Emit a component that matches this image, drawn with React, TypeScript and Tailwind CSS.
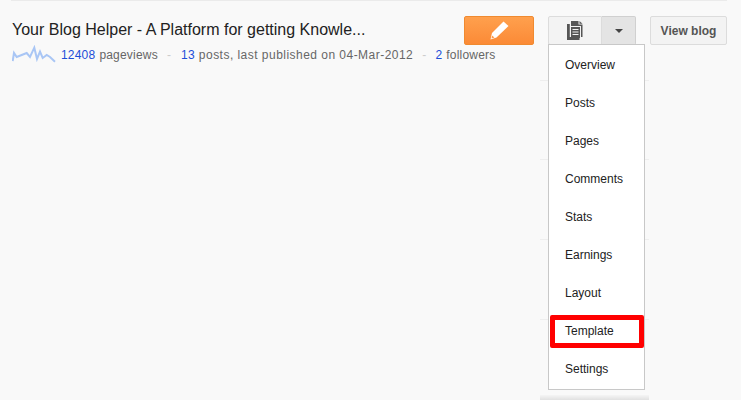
const MENU_ITEMS = ["Overview", "Posts", "Pages", "Comments", "Stats", "Earnings", "Layout", "Template", "Settings"];
const SEPARATORS = ["top-[79px]", "top-[158px]", "top-[238px]", "top-[318px]"];

function Sparkline() {
    return (
        <svg width="44" height="18" viewBox="0 0 44 18" className="-mt-[2px] shrink-0">
            <path
                d="M0.700 16 L2 8 L4.700 12 L9.700 10 L14.700 8 L18 12 L22.300 2.700 L25 14 L28 6.700 L30.700 13 L34.700 10 L38 12 L43 16.700"
                fill="none"
                stroke="#a9c6f5"
                strokeWidth="2"
            />
        </svg>
    );
}

function PagesIcon() {
    return (
        <svg width="16" height="19" viewBox="0 0 16 19">
            <path d="M4 0 H11.500 V3.500 H15.500 V16 H14 V5 H4 Z" fill="#555" />
            <path d="M12.500 0 L15.500 2.700 H12.500 Z" fill="#555" />
            <path d="M0 3 H2.800 V16 H12.500 V19 H0 Z" fill="#555" />
            <path d="M4 6 H13 V17 H4 Z" fill="#555" />
            <path d="M5.500 8 H11.500 V9 H5.500 Z M5.500 10.500 H11.500 V11.500 H5.500 Z M5.500 13 H11.500 V14 H5.500 Z" fill="#f1f1f1" />
        </svg>
    );
}

function PencilIcon() {
    return (
        <svg width="19" height="19" viewBox="0 0 19 19">
            <path d="M13.500 0.500 L18.500 5 L6.500 16.500 L0.500 18.500 L2 12 Z" fill="#fff" />
            <path d="M2 14.500 L4.500 16.500 L1.500 17.500 Z" fill="#fb9a4c" />
        </svg>
    );
}

export default function App() {
    return (
        <div className="h-[400px] w-[741px] overflow-hidden bg-[#f9f9f9] font-['Liberation_Sans',Arial,sans-serif]">
            <div className="relative mx-[11px] mr-[14px] h-[400px] border-t border-[#ebebeb] pl-px">
                <div className="flex items-start pt-[15px]">
                    <div className="w-[452px]">
                        <h1 className="whitespace-nowrap text-[16px] leading-[28px] text-[#222]">
                            Your Blog Helper - A Platform for getting Knowle...
                        </h1>
                        <div className="mt-[2px] flex items-center whitespace-nowrap text-[12px] leading-[18px] tracking-[0.2px] text-[#666]">
                            <Sparkline />
                            <a className="ml-[5px] text-[#1c4ed8]">12408</a>
                            <span className="ml-[4px]">pageviews</span>
                            <span className="ml-[9px] mr-[10px] text-[#ccc]">-</span>
                            <a className="text-[#1c4ed8]">13</a>
                            <span className="ml-[4px] tracking-[0.47px]">posts, last published on 04-Mar-2012</span>
                            <span className="mx-[9px] text-[#ccc]">-</span>
                            <a className="text-[#1c4ed8]">2</a>
                            <span className="ml-[4px]">followers</span>
                        </div>
                    </div>
                    <button className="flex h-[29px] w-[70px] items-center justify-center rounded-[2px] border border-[#f08a30] bg-gradient-to-b from-[#ffa04d] to-[#fb8a36]">
                        <PencilIcon />
                    </button>
                    <div className="ml-[14px] flex h-[29px] w-[88px]">
                        <button className="flex w-[54px] items-center justify-center rounded-l-[2px] border border-[#dcdcdc] bg-[#f3f3f3]">
                            <PagesIcon />
                        </button>
                        <button className="flex w-[34px] items-center justify-center rounded-r-[2px] border border-l-0 border-[#d0d0d0] bg-[#e4e4e4]">
                            <span className="mt-px border-x-[4px] border-t-[4px] border-x-transparent border-t-[#444]" />
                        </button>
                    </div>
                    <button className="ml-[14px] h-[29px] w-[77px] rounded-[2px] border border-[#dcdcdc] bg-[#f3f3f3] text-[12px] font-bold text-[#555]">
                        View blog
                    </button>
                </div>
                {SEPARATORS.map((top) => (
                    <div key={top} className={`absolute left-[529px] h-px w-[109px] bg-[#eeeeee] ${top}`} />
                ))}
                <div className="absolute left-[529px] top-[394px] h-[6px] w-[109px] bg-gradient-to-b from-[#f5f5f5] to-[#dddddd]" />
                <div className="absolute left-[537px] top-[43px] w-[97px] border border-[#c8c8c8] bg-white py-px">
                    {MENU_ITEMS.map((item) => (
                        <div
                            key={item}
                            className={
                                item === "Template"
                                    ? "relative h-[38px] pl-[16px] text-[12px] leading-[38px] text-[#222]"
                                    : "h-[38px] pl-[16px] text-[12px] leading-[38px] text-[#222]"
                            }
                        >
                            {item}
                            {item === "Template" && (
                                <span className="absolute left-[1px] top-[3px] h-[33px] w-[94px] rounded-[2px] border-[5px] border-[#ff0000]" />
                            )}
                        </div>
                    ))}
                </div>
            </div>
        </div>
    );
}
